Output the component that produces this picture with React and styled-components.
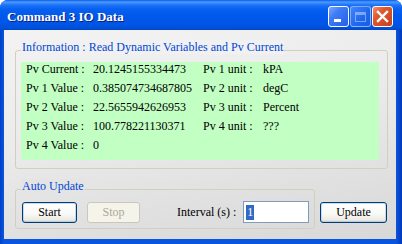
import React from "react";
import styled, { createGlobalStyle } from "styled-components";

const serif = `"Liberation Serif", "DejaVu Serif", "Times New Roman", serif`;

const GlobalStyle = createGlobalStyle`
    html, body {
        margin: 0;
        padding: 0;
        background: #ffffff;
        font-family: ${serif};
    }
    * {
        box-sizing: border-box;
    }
`;

const Window = styled.div`
    width: 402px;
    height: 244px;
    display: flex;
    flex-direction: column;
    border-radius: 8px 8px 0 0;
    overflow: hidden;
    font-family: ${serif};
    font-size: 12px;
    background: linear-gradient(to right, #0040c8 0px, #0a55e0 4px, #0a55e0 396px, #0038b8 402px);
`;

const TitleBar = styled.div`
    height: 30px;
    flex: none;
    display: flex;
    align-items: center;
    padding: 6px 9px 3px 7px;
    background: linear-gradient(
        to bottom,
        #0a5ae8 0px,
        #4a9cff 2px,
        #1f72f8 5px,
        #0660f0 9px,
        #0058ec 16px,
        #0055e6 24px,
        #0150d8 28px,
        #0046c8 30px
    );
`;

const Title = styled.div`
    flex: 1;
    color: #ffffff;
    font-family: ${serif};
    font-weight: bold;
    font-size: 13px;
    text-shadow: 1px 1px 0 #0a1e78;
    white-space: nowrap;
`;

const Caption = styled.div`
    display: flex;
    gap: 1px;
`;

const CaptionButton = styled.div`
    width: 21px;
    height: 21px;
    border-radius: 3px;
    position: relative;
    display: flex;
    align-items: center;
    justify-content: center;
    border: 1px solid ${(p) => (p.$disabled ? "rgba(255,255,255,0.45)" : "#ffffff")};
    background: ${(p) =>
        p.$kind === "close"
            ? "linear-gradient(135deg, #f09070 0%, #e0582c 35%, #c8401c 100%)"
            : p.$disabled
            ? "linear-gradient(135deg, #3f86ff 0%, #1f66ee 60%, #1a5ce2 100%)"
            : "linear-gradient(135deg, #7aa8ff 0%, #3e7cf8 35%, #2460e4 100%)"};
`;

const MinBar = styled.div`
    position: absolute;
    left: 5px;
    bottom: 4px;
    width: 7px;
    height: 3px;
    background: #ffffff;
`;

const MaxBox = styled.div`
    width: 11px;
    height: 10px;
    border: 1px solid rgba(255, 255, 255, 0.4);
    border-top-width: 3px;
`;

const Frame = styled.div`
    flex: 1;
    display: flex;
    padding: 0 6px 5px 4px;
`;

const Client = styled.div`
    flex: 1;
    display: flex;
    flex-direction: column;
    padding: 20px 8px 0 11px;
    background: linear-gradient(170deg, #f3f3f3 0%, #eaeaea 45%, #d8d8d8 100%);
`;

const GroupBox = styled.div`
    border: 1px solid #d0d0bf;
    border-radius: 3px;
    padding: ${(p) => p.$pad};
    width: ${(p) => (p.$w ? `${p.$w}px` : "auto")};
    flex: none;
`;

const Legend = styled.div`
    width: fit-content;
    margin-top: -11px;
    padding: 0 1px;
    line-height: 14px;
    color: #0046d5;
    white-space: nowrap;
    background: ${(p) => p.$bg};
`;

const InfoPanel = styled.div`
    margin-top: 8px;
    background: #c2ffc2;
    display: grid;
    grid-template-columns: 67px 110px 60px 1fr;
    grid-auto-rows: 14px;
    row-gap: 5px;
    padding: 0 0 8px 5px;
    line-height: 14px;
    color: #000000;
`;

const Cell = styled.div`
    white-space: nowrap;
`;

const UpdateRow = styled.div`
    display: flex;
    align-items: flex-end;
    gap: 5px;
    margin-top: 20px;
`;

const Controls = styled.div`
    display: flex;
    align-items: center;
    margin-top: 8px;
`;

const Button = styled.button`
    width: ${(p) => p.$w}px;
    height: 21px;
    flex: none;
    margin: ${(p) => p.$margin || 0};
    padding: 0;
    border-radius: 3px;
    font-family: ${serif};
    font-size: 12px;
    color: ${(p) => (p.disabled ? "#aca899" : "#000000")};
    border: 1px solid ${(p) => (p.disabled ? "#cac8bb" : "#003c74")};
    background: ${(p) =>
        p.disabled
            ? "#f5f4ea"
            : "linear-gradient(to bottom, #ffffff 0%, #f8f8f4 60%, #ecebe4 88%, #d8d4c8 100%)"};
    box-shadow: ${(p) => (p.disabled ? "none" : "inset 0 0 0 1px rgba(160, 190, 235, 0.55)")};
`;

const Label = styled.div`
    margin: 0 7px 0 37px;
    white-space: nowrap;
`;

const Field = styled.div`
    width: 66px;
    height: 22px;
    flex: none;
    border: 1px solid #7f9db9;
    background: #ffffff;
    display: flex;
    align-items: center;
    padding-left: 2px;
`;

const Selected = styled.span`
    background: #316ac5;
    color: #ffffff;
    line-height: 15px;
    padding: 0 1px;
`;

const rows = [
    ["Pv Current :", "20.1245155334473", "Pv 1 unit :", "kPA"],
    ["Pv 1 Value :", "0.385074734687805", "Pv 2 unit :", "degC"],
    ["Pv 2 Value :", "22.5655942626953", "Pv 3 unit :", "Percent"],
    ["Pv 3 Value :", "100.778221130371", "Pv 4 unit :", "???"],
    ["Pv 4 Value :", "0", "", ""],
];

const App = () => {
    return (
        <>
            <GlobalStyle />
            <Window>
                <TitleBar>
                    <Title>Command 3 IO Data</Title>
                    <Caption>
                        <CaptionButton>
                            <MinBar />
                        </CaptionButton>
                        <CaptionButton $disabled>
                            <MaxBox />
                        </CaptionButton>
                        <CaptionButton $kind="close">
                            <svg width="13" height="13" viewBox="0 0 13 13">
                                <path
                                    d="M2 2 L11 11 M11 2 L2 11"
                                    stroke="#ffffff"
                                    strokeWidth="2.4"
                                    strokeLinecap="square"
                                />
                            </svg>
                        </CaptionButton>
                    </Caption>
                </TitleBar>
                <Frame>
                    <Client>
                        <GroupBox $pad="0 8px 8px 5px">
                            <Legend $bg="#f1f1f1">Information : Read Dynamic Variables and Pv Current</Legend>
                            <InfoPanel>
                                {rows.map((row, i) =>
                                    row.map((text, j) => <Cell key={`${i}-${j}`}>{text}</Cell>)
                                )}
                            </InfoPanel>
                        </GroupBox>
                        <UpdateRow>
                            <GroupBox $w={300} $pad="0 5px 5px 5px">
                                <Legend $bg="#e4e4e4">Auto Update</Legend>
                                <Controls>
                                    <Button $w={55} $margin="0 0 0 1px">
                                        Start
                                    </Button>
                                    <Button $w={53} $margin="0 0 0 10px" disabled>
                                        Stop
                                    </Button>
                                    <Label>Interval (s) :</Label>
                                    <Field>
                                        <Selected>1</Selected>
                                    </Field>
                                </Controls>
                            </GroupBox>
                            <Button $w={67} $margin="0 0 6px 0">
                                Update
                            </Button>
                        </UpdateRow>
                    </Client>
                </Frame>
            </Window>
        </>
    );
};

export default App;
